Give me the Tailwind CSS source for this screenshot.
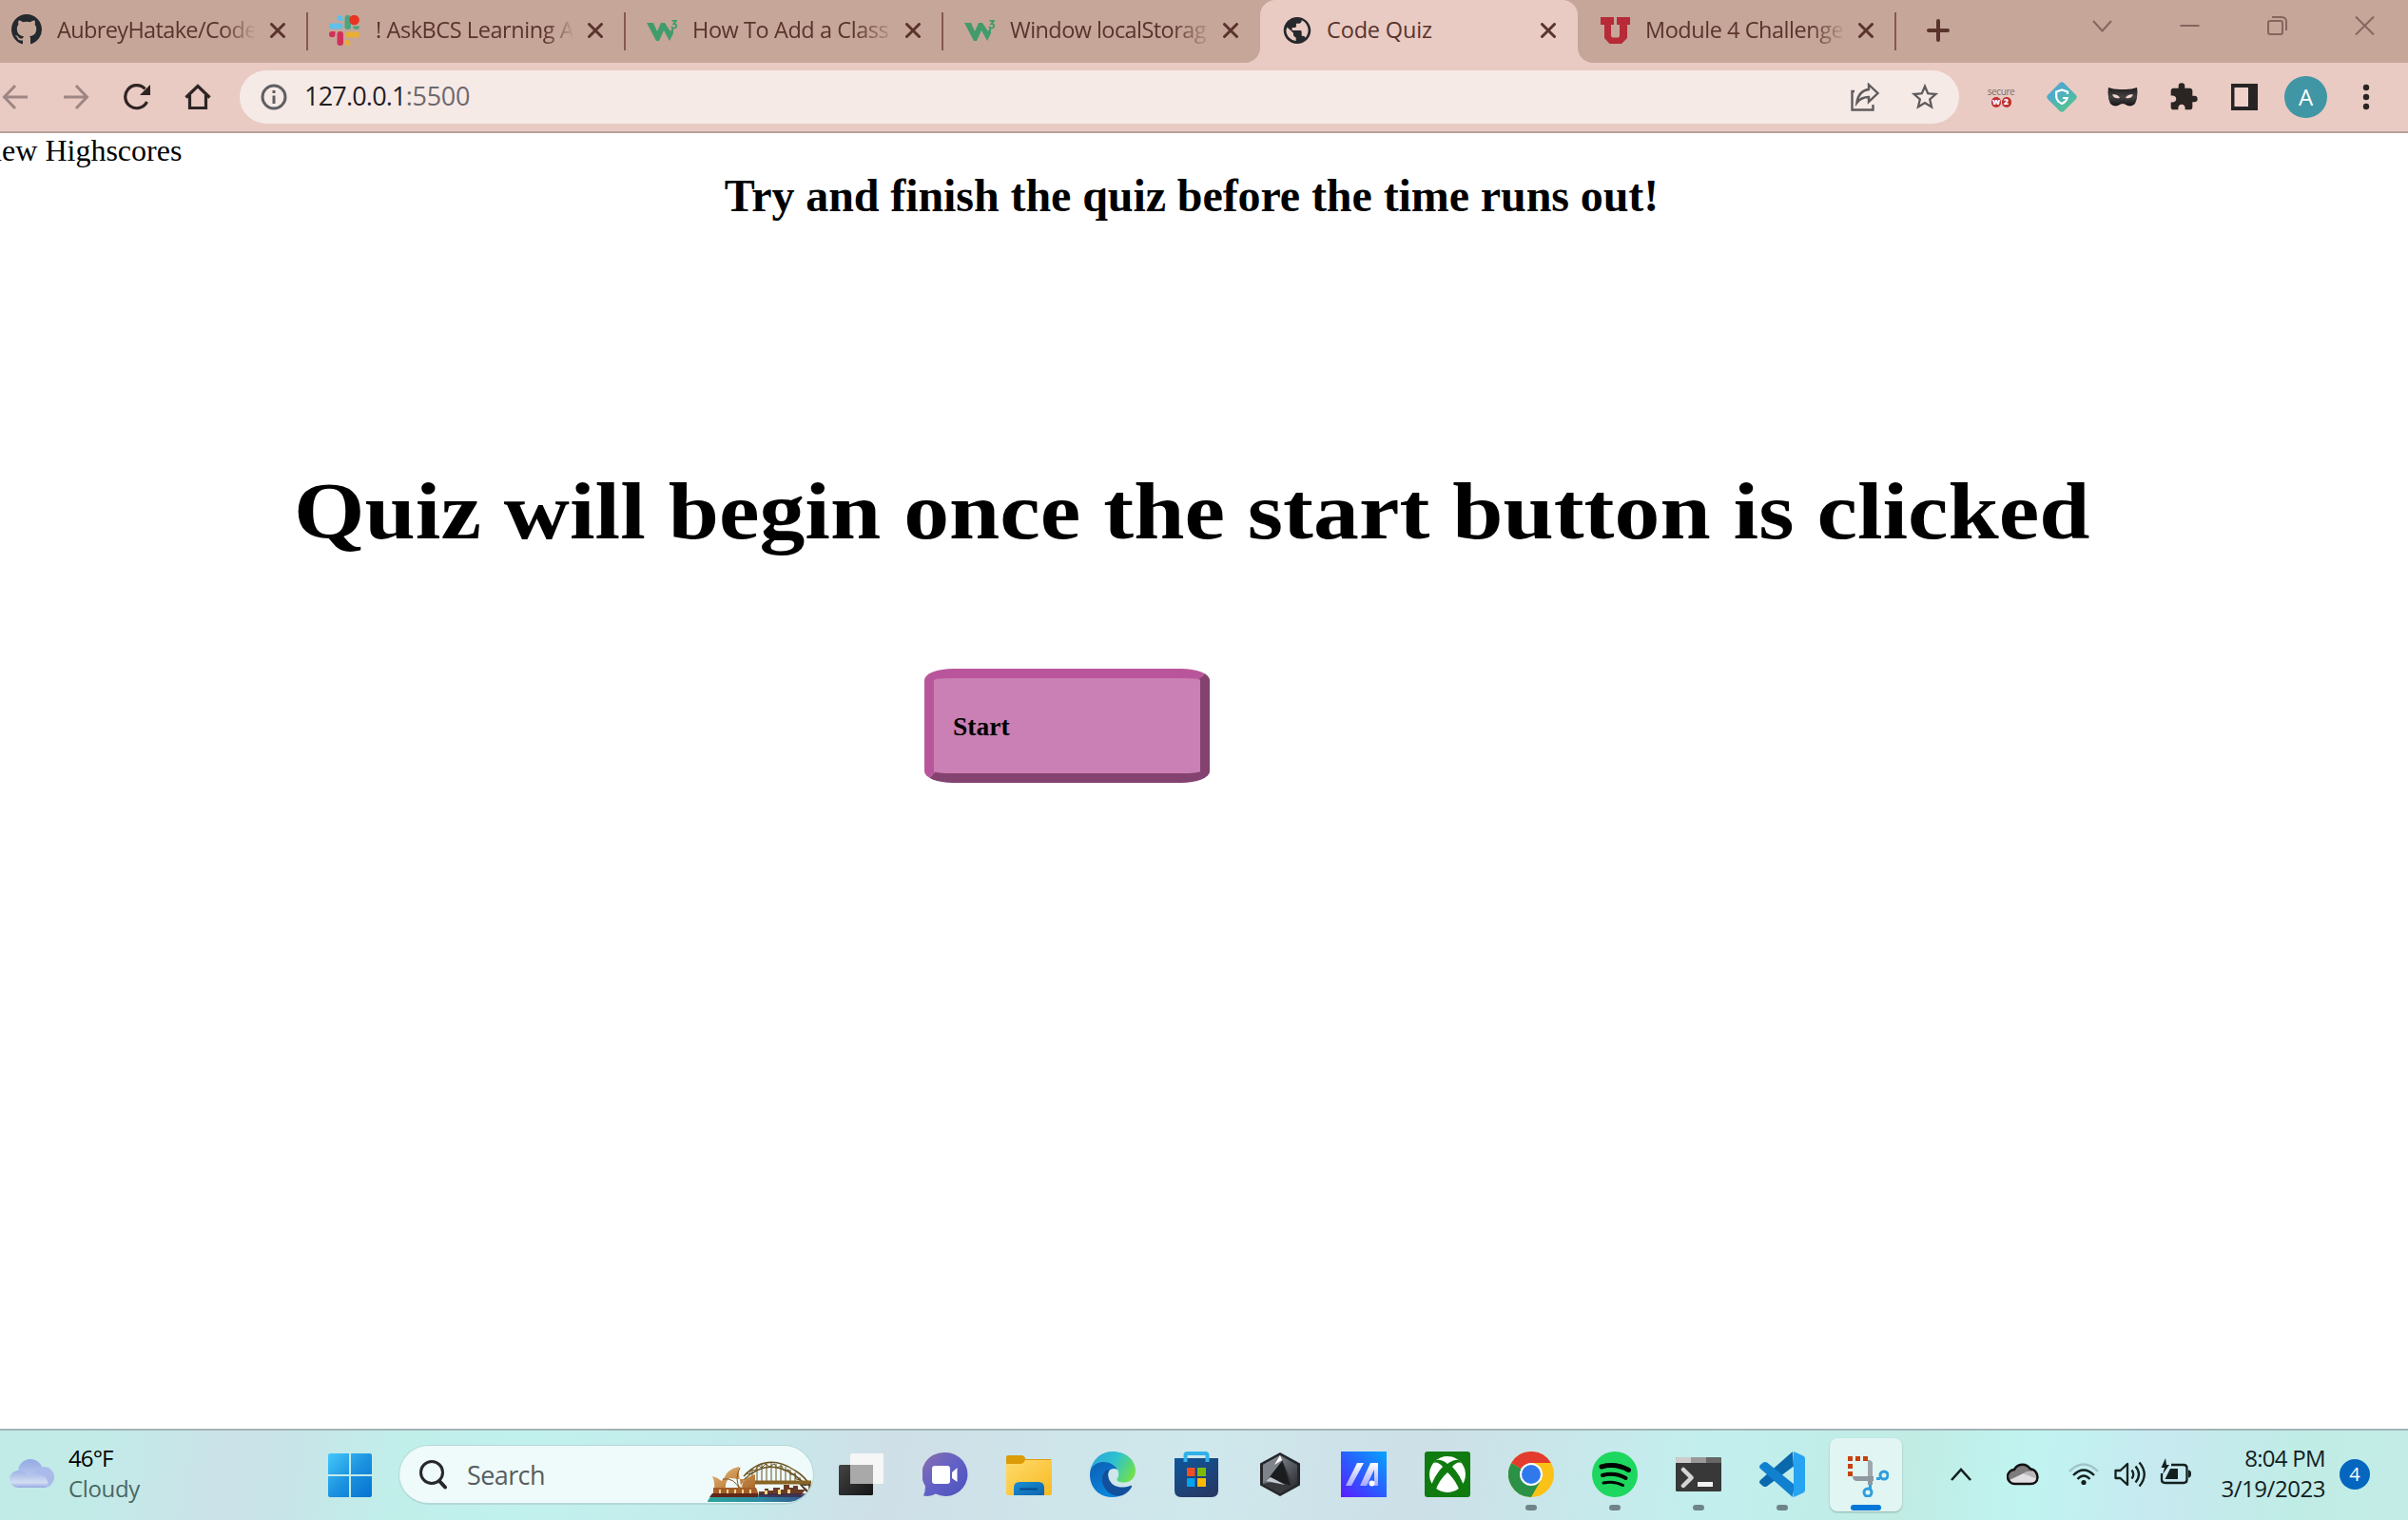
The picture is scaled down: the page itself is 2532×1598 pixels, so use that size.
<!DOCTYPE html>
<html lang="en">
<head>
<meta charset="utf-8">
<title>Code Quiz</title>
<script src="https://cdn.jsdelivr.net/npm/@tailwindcss/browser@4"></script>
</head>
<body class="w-[2532px] h-[1598px] overflow-hidden bg-white flex flex-col font-['Open_Sans','Noto_Sans',sans-serif] text-black">

<!-- Tab strip -->
<header class="h-[66px] shrink-0 flex bg-[#e9cbc3] text-[#5a332d] text-[23.5px] leading-[62px] whitespace-nowrap">
  <div class="flex w-[1325px] shrink-0 bg-[#c6a699] rounded-br-2xl overflow-hidden">
    <div class="w-[323px] shrink-0 relative flex pl-3">
      <svg class="w-8 h-8 mt-[15px] shrink-0" viewBox="0 0 16 16" fill="#24292e"><path d="M8 0C3.58 0 0 3.58 0 8c0 3.54 2.29 6.53 5.47 7.59.4.07.55-.17.55-.38 0-.19-.01-.82-.01-1.49-2.01.37-2.53-.49-2.69-.94-.09-.23-.48-.94-.82-1.13-.28-.15-.68-.52-.01-.53.63-.01 1.08.58 1.23.82.72 1.21 1.87.87 2.33.66.07-.52.28-.87.51-1.07-1.78-.2-3.64-.89-3.64-3.95 0-.87.31-1.59.82-2.15-.08-.2-.36-1.02.08-2.12 0 0 .67-.21 2.2.82a7.6 7.6 0 0 1 4 0c1.53-1.04 2.2-.82 2.2-.82.44 1.1.16 1.92.08 2.12.51.56.82 1.27.82 2.15 0 3.07-1.87 3.75-3.65 3.95.29.25.54.73.54 1.48 0 1.07-.01 1.93-.01 2.2 0 .21.15.46.55.38A8 8 0 0 0 16 8c0-4.42-3.58-8-8-8z"/></svg>
      <div class="ml-4 mr-px w-[207px] overflow-hidden tracking-[-0.64px] [mask-image:linear-gradient(90deg,#000_174px,transparent_210px)]">AubreyHatake/Code-</div>
      <svg class="w-4 h-4 ml-[16px] mt-6" viewBox="0 0 16 16" stroke="#5a332d" stroke-width="3" stroke-linecap="round"><path d="M1.500 1.500l13 13M14.500 1.500l-13 13"/></svg>
    </div>
    <div class="w-[334px] shrink-0 flex pl-[23px] relative">
      <i class="absolute left-[-1px] top-[13px] w-0.5 h-10 bg-[#85584f]"></i>
      <svg class="w-8 h-8 mt-4 shrink-0" viewBox="0 0 32 32"><g fill="#5fc0ea"><rect x="0" y="8.500" width="14.500" height="6" rx="3"/><path d="M8.500 3a3 3 0 0 1 6 0v3h-3a3 3 0 0 1-3-3z"/></g><g fill="#4aa581"><rect x="16.500" y="0" width="6.500" height="15" rx="3"/><path d="M25 11.500h7a3.200 3.200 0 0 1-7 0z"/></g><g fill="#d1305b"><rect x="8.500" y="17" width="6.500" height="15" rx="3"/><path d="M0 20a3 3 0 0 1 3-3h3.500v3a3.200 3.200 0 0 1-6.500 0z"/></g><g fill="#e8af36"><rect x="17" y="17.500" width="15" height="6" rx="3"/><path d="M16.500 26h3.500a3 3 0 1 1-3.500 3z"/></g><circle cx="26.500" cy="5" r="5.300" fill="#ea3323"/></svg>
      <div class="ml-[17px] w-[207px] overflow-hidden tracking-[-0.43px] [mask-image:linear-gradient(90deg,#000_178px,transparent_210px)]">! AskBCS Learning A</div>
      <svg class="w-4 h-4 ml-[16px] mt-6" viewBox="0 0 16 16" stroke="#5a332d" stroke-width="3" stroke-linecap="round"><path d="M1.500 1.500l13 13M14.500 1.500l-13 13"/></svg>
    </div>
    <div class="w-[334px] shrink-0 flex pl-[23px] relative">
      <i class="absolute left-[-1px] top-[13px] w-0.5 h-10 bg-[#85584f]"></i>
      <svg class="w-8 h-8 mt-4 shrink-0" viewBox="0 0 32 32"><path fill="#429b6b" d="M0 8h7l4 9 4-9h4l6 9 1.500-3H28v5l-4 8-6-11-5 11h-3z"/><path fill="none" stroke="#429b6b" stroke-width="1.800" d="M26.500 5.800h4.500l-2.600 3.200c4 0 3.500 4.600.2 4.600-1.500 0-2.300-.8-2.600-1.800"/></svg>
      <div class="ml-4 mr-px w-[207px] overflow-hidden tracking-[-0.43px] [mask-image:linear-gradient(90deg,#000_170px,transparent_216px)]">How To Add a Class</div>
      <svg class="w-4 h-4 ml-[16px] mt-6" viewBox="0 0 16 16" stroke="#5a332d" stroke-width="3" stroke-linecap="round"><path d="M1.500 1.500l13 13M14.500 1.500l-13 13"/></svg>
    </div>
    <div class="w-[334px] shrink-0 flex pl-[23px] relative">
      <i class="absolute left-[-1px] top-[13px] w-0.5 h-10 bg-[#85584f]"></i>
      <svg class="w-8 h-8 mt-4 shrink-0" viewBox="0 0 32 32"><path fill="#429b6b" d="M0 8h7l4 9 4-9h4l6 9 1.500-3H28v5l-4 8-6-11-5 11h-3z"/><path fill="none" stroke="#429b6b" stroke-width="1.800" d="M26.500 5.800h4.500l-2.600 3.200c4 0 3.500 4.600.2 4.600-1.500 0-2.300-.8-2.600-1.800"/></svg>
      <div class="ml-4 mr-px w-[207px] overflow-hidden tracking-[-0.56px] [mask-image:linear-gradient(90deg,#000_170px,transparent_214px)]">Window localStorag</div>
      <svg class="w-4 h-4 ml-[16px] mt-6" viewBox="0 0 16 16" stroke="#5a332d" stroke-width="3" stroke-linecap="round"><path d="M1.500 1.500l13 13M14.500 1.500l-13 13"/></svg>
    </div>
  </div>
  <div class="w-[334px] h-10 shrink-0 bg-[#c6a699]">
    <div class="h-10 bg-[#e9cbc3] rounded-t-2xl flex pl-6">
      <svg class="w-8 h-8 mt-4 -ml-px mr-px shrink-0" viewBox="0 0 24 24" fill="#26282b"><path d="M12 1.500C6.200 1.500 1.300 6.200 1.300 12S6.200 22.500 12 22.500 22.700 17.800 22.700 12 17.800 1.500 12 1.500zM4.200 9.500L9 14v1.200c0 1.200 1 2.200 2 2.200v2.800C6.500 19.700 3.300 16 3.300 12c0-.8.300-1.700.900-2.500zM18.500 17.800c-.3-.9-1.100-1.500-2-1.500h-1v-3.200c0-.6-.5-1.100-1-1.100H8V9.800h2.200c.6 0 1-.5 1-1.100V6.500h2.200c1.200 0 2.100-1 2.100-2.200v-.4c3 1.300 5.200 4.400 5.200 8 0 2.300-.9 4.300-2.200 5.900z"/></svg>
      <div class="ml-[14px] w-[225px] tracking-[-0.15px]">Code Quiz</div>
      <svg class="w-4 h-4 mt-6" viewBox="0 0 16 16" stroke="#5a332d" stroke-width="3" stroke-linecap="round"><path d="M1.500 1.500l13 13M14.500 1.500l-13 13"/></svg>
    </div>
  </div>
  <div class="grow flex bg-[#c6a699] rounded-bl-2xl">
    <div class="w-[335px] shrink-0 flex pl-6 relative">
      <svg class="w-8 h-8 mt-4 shrink-0" viewBox="0 0 32 32" fill="#b72a37"><path d="M0 2h14v8h-3v12l1.500 1.500h6L20 22V10h-3V2h14v8h-3v14l-6 6H9.500L4 24V10H0z"/></svg>
      <div class="ml-[15px] mr-px w-[207px] overflow-hidden tracking-[-0.46px] [mask-image:linear-gradient(90deg,#000_174px,transparent_212px)]">Module 4 Challenge</div>
      <svg class="w-4 h-4 ml-[16px] mt-6" viewBox="0 0 16 16" stroke="#5a332d" stroke-width="3" stroke-linecap="round"><path d="M1.500 1.500l13 13M14.500 1.500l-13 13"/></svg>
      <i class="absolute right-0 top-[13px] w-0.5 h-10 bg-[#85584f]"></i>
    </div>
    <svg class="w-6 h-6 ml-8 mt-5 shrink-0" viewBox="0 0 24 24" stroke="#5a332d" stroke-width="4" stroke-linecap="round"><path d="M12 2v20M2 12h20"/></svg>
    <div class="ml-auto mr-[35px] mt-[17px] flex gap-[71px]">
      <svg class="w-[21px] h-5" viewBox="0 0 21 20" fill="none" stroke="#85655d" stroke-width="2"><path d="M1 5l9.500 10.500L20 5"/></svg>
      <svg class="w-[21px] h-5" viewBox="0 0 21 20" stroke="#85655d" stroke-width="2"><path d="M0.500 10h20"/></svg>
      <svg class="w-[21px] h-5" viewBox="0 0 21 20" fill="none" stroke="#85655d" stroke-width="2"><rect x="1" y="5" width="15" height="14" rx="2"/><path d="M5 1h10q5 0 5 5v9"/></svg>
      <svg class="w-[21px] h-5" viewBox="0 0 21 20" stroke="#85655d" stroke-width="2"><path d="M1 .5l19 19M20 .5l-19 19"/></svg>
    </div>
  </div>
</header>

<!-- Toolbar -->
<nav class="h-[74px] shrink-0 flex items-center bg-[#e9cbc3] border-b-2 border-[#b9a19c] pl-0.5">
  <div class="flex items-center gap-9 w-[250px] shrink-0">
    <svg class="w-7 h-7 shrink-0" viewBox="0 0 28 28" fill="none" stroke="#9d8683" stroke-width="3"><path d="M27 14H3M14 2L2.500 14 14 26"/></svg>
    <svg class="w-7 h-7 shrink-0" viewBox="0 0 28 28" fill="none" stroke="#9d8683" stroke-width="3"><path d="M1 14h24M14 2l11.500 12L14 26"/></svg>
    <svg class="w-7 h-7 shrink-0" viewBox="0 0 28 28"><path d="M24.500 19A12 12 0 1 1 22.500 5.500" fill="none" stroke="#2e2423" stroke-width="3.200"/><path d="M28 1v11H17z" fill="#2e2423"/></svg>
    <svg class="w-7 h-7 shrink-0" viewBox="0 0 28 28" fill="none" stroke="#2e2423" stroke-width="3.200"><path d="M1.500 14.500L14 2.500l12.500 12M5.500 12v13.500h17V12"/></svg>
  </div>
  <div class="w-[1808px] h-14 shrink-0 rounded-full bg-[#f6eae7] flex items-center pl-[22px] pr-[19px] text-[27px]">
    <svg class="w-7 h-7 mr-[18px]" viewBox="0 0 28 28" fill="none" stroke="#5f6063" stroke-width="3"><circle cx="14" cy="14" r="12"/><path d="M14 7v3M14 12.500v8.500"/></svg>
    <span class="text-[#1f2023] -mt-px tracking-[-0.8px]">127.0.0.1</span><span class="text-[#6d696c] -mt-px tracking-[-0.3px]">:5500</span>
    <svg class="w-[30px] h-[30px] ml-auto" viewBox="0 0 30 30" fill="none" stroke="#5f5b5c" stroke-width="2.400"><path d="M4 9H1.500v19.500h22V23"/><path d="M19 2l9.500 9L19 20v-5c-6 0-9.500 2-12.500 6 1-8 5.500-13 12.500-14z"/></svg>
    <svg class="w-[34px] h-[34px] ml-[31px]" viewBox="0 0 24 24" fill="#5f5b5c"><path d="M22 9.240l-7.190-.62L12 2 9.190 8.630 2 9.240l5.460 4.730L5.820 21 12 17.270 18.180 21l-1.630-7.030L22 9.240zM12 15.400l-3.760 2.270 1-4.280-3.320-2.880 4.380-.38L12 6.100l1.710 4.040 4.380.38-3.320 2.880 1 4.280L12 15.400z"/></svg>
  </div>
  <div class="flex items-center ml-7 text-[10px]">
    <div class="w-8 flex flex-col items-center leading-none">
      <span class="text-[10px] tracking-[-0.4px] text-[#7b6a68] leading-[11px]">secure</span>
      <span class="flex gap-px text-white text-[9px] font-bold leading-[10px]"><b class="w-2.5 h-[11px] rounded-full bg-[#c03032] text-center tracking-[-1px]">w</b><b class="w-2.5 h-[11px] rounded-full bg-[#c03032] text-center">2</b></span>
    </div>
    <svg class="w-8 h-8 ml-8" viewBox="0 0 32 32"><defs><linearGradient id="gr" x1="0.200" y1="0" x2="0.800" y2="1"><stop offset="0.300" stop-color="#4fabc9"/><stop offset="0.800" stop-color="#52bf9a"/></linearGradient></defs><path d="M13.500 1.500q2.500-2.500 5 0l12 12q2.500 2.500 0 5l-12 12q-2.500 2.500-5 0l-12-12q-2.500-2.500 0-5z" fill="url(#gr)"/><path d="M22 13v-2.500L16 8.500l-5.800 2V16q.5 4.500 5.800 7 5-2.300 5.600-6H17" fill="none" stroke="#fff" stroke-width="2.200"/></svg>
    <svg class="w-8 h-8 ml-8" viewBox="0 0 32 32"><defs><linearGradient id="mk" x1="0" y1="0" x2="0" y2="1"><stop offset="0" stop-color="#1b1a1b"/><stop offset=".5" stop-color="#454242"/><stop offset="1" stop-color="#161516"/></linearGradient></defs><path d="M1 6q6 2.500 15 2 9 .5 15-2 1.500 10-2 17-3 3.500-8 2-3-2-5-2t-5 2q-5 1.500-8-2Q-.5 16 1 6z" fill="url(#mk)"/><path d="M5 13.500q5.500-1 8 3.500-5.500 1.500-8-3.500zM27 13.500q-5.500-1-8 3.500 5.500 1.500 8-3.500z" fill="#f2d4cf"/></svg>
    <svg class="w-8 h-8 ml-8" viewBox="0 0 24 24" fill="#2a2423"><path d="M20.500 11H19V7c0-1.100-.9-2-2-2h-4V3.500a2.500 2.500 0 0 0-5 0V5H4c-1.100 0-1.990.9-1.990 2v3.800H3.500c1.490 0 2.700 1.210 2.700 2.700s-1.210 2.700-2.700 2.700H2V20c0 1.100.9 2 2 2h3.800v-1.500c0-1.490 1.210-2.700 2.700-2.700s2.700 1.210 2.700 2.700V22H17c1.100 0 2-.9 2-2v-4h1.500a2.500 2.500 0 0 0 0-5z"/></svg>
    <svg class="w-7 h-7 ml-[34px]" viewBox="0 0 28 28"><path fill="#272425" d="M0 0h28v28H0z"/><path fill="#f0d2cb" d="M3.500 4H18v20H3.500z"/></svg>
    <div class="w-[45px] h-11 ml-7 rounded-full bg-[#4096a5] text-white text-[24px] leading-[43px] text-center">A</div>
    <svg class="w-2 h-7 ml-[37px]" viewBox="0 0 8 28" fill="#2a2423"><circle cx="4" cy="4" r="3.200"/><circle cx="4" cy="14" r="3.200"/><circle cx="4" cy="24" r="3.200"/></svg>
  </div>
</nav>

<!-- Page -->
<main class="grow w-[2506px] flex flex-col items-center font-['Liberation_Serif',serif] whitespace-nowrap">
  <a class="self-start text-[32px] leading-9 -ml-7">View Highscores</a>
  <h2 class="mt-0.5 text-[48px] leading-[56px] font-bold tracking-[-0.08px]">Try and finish the quiz before the time runs out!</h2>
  <h1 class="mt-[254px] text-[84px] leading-[100px] font-bold scale-x-[1.14]">Quiz will begin once the start button is clicked</h1>
  <button class="self-start ml-[972px] mt-[115px] w-[300px] h-[120px] border-[10px] border-t-[#b9569b] border-l-[#b9569b] border-r-[#844270] border-b-[#844270] bg-[#ca80b4] rounded-[30px/12px] pl-5 pt-0.5 text-left text-[27.5px] font-bold">Start</button>
</main>

<!-- Taskbar -->
<footer class="h-24 shrink-0 border-t-2 border-[#a3b4b7] flex items-center relative text-[24px] leading-8 whitespace-nowrap bg-[linear-gradient(100deg,#c1ebe6_0%,#c2ebe8_4%,#cbe2e8_9.500%,#c8e4e8_12%,#c0efea_17%,#c1f1ed_22%,#c4ebec_30%,#cfdfe7_37%,#cee5ea_44%,#cfe8ec_50%,#cddfe7_59%,#c7e9eb_66%,#c2efee_71%,#c0ece4_79%,#c0f4f1_84%,#c7e9f0_89.500%,#c0ece6_95%,#c4ece6_100%)]">
  <svg class="w-[50px] h-8 ml-2 -mt-1" viewBox="0 0 50 32"><defs><linearGradient id="cl" x1="0" y1="0" x2="0" y2="1"><stop offset="0" stop-color="#93a9e4"/><stop offset="1" stop-color="#c9d6f0"/></linearGradient><linearGradient id="c2" x1="0" y1="0" x2="0" y2="1"><stop offset="0" stop-color="#9db2e6"/><stop offset=".7" stop-color="#d3def2"/><stop offset="1" stop-color="#94a9e2"/></linearGradient></defs><circle cx="24" cy="14" r="13" fill="url(#cl)"/><circle cx="38" cy="20" r="11" fill="#a9bbea"/><path d="M11 13c6 0 9 3 11 6l6-4 12 5q6 11-3 11H11a9 9 0 0 1 0-18z" fill="url(#c2)"/></svg>
  <div class="ml-3.5 w-[90px] -mt-1"><div class="tracking-[-0.9px]">46°F</div><div class="text-[#4b6764] tracking-[-0.34px]">Cloudy</div></div>
  <svg class="w-[46px] h-[46px] ml-[183px]" viewBox="0 0 46 46"><defs><linearGradient id="wn" gradientUnits="userSpaceOnUse" x1="0" y1="0" x2="46" y2="46"><stop offset="0" stop-color="#44c8fb"/><stop offset=".5" stop-color="#1c93e0"/><stop offset="1" stop-color="#0572d0"/></linearGradient></defs><path fill="url(#wn)" d="M2 0h20v22H0V2q0-2 2-2zM24 0h20q2 0 2 2v20H24zM0 24h22v22H2q-2 0-2-2zM24 24h22v20q0 2-2 2H24z"/></svg>
  <div class="w-[437px] h-[63px] ml-7 -mt-0.5 rounded-full bg-[#effafa] border border-b-2 border-[#b3d8d8] overflow-hidden flex items-center text-[27px] text-[#555e60]">
    <svg class="w-[30px] h-8 ml-[21px]" viewBox="0 0 30 32" fill="none" stroke="#26282a" stroke-linecap="round"><circle cx="13" cy="14" r="11.500" stroke-width="3"/><path d="M21 23l6 6.500" stroke-width="4"/></svg>
    <span class="ml-[20px] mt-0.5 tracking-[-0.6px]">Search</span>
    <svg class="w-[110px] h-[44px] ml-auto mr-[1px] self-end" viewBox="0 0 110 44">
      <defs><linearGradient id="op" x1="0" y1="0" x2="1" y2="1"><stop offset="0" stop-color="#e9b874"/><stop offset="1" stop-color="#a9672a"/></linearGradient><linearGradient id="wt" x1="0" y1="0" x2="1" y2="0"><stop offset="0" stop-color="#2ba59c"/><stop offset=".5" stop-color="#2d8da5"/><stop offset="1" stop-color="#34508a"/></linearGradient></defs>
      <path d="M0 42l4-6h104q-10 6-22 7H0z" fill="url(#wt)"/>
      <g fill="none" stroke="#6b5320"><path d="M38 16Q62-10 92 10q10 6 17 17M38 20Q62-4 90 14q8 5 13 12" stroke-width="1.500"/><path d="M40 13l4 1 2-5 4 1 3-5 4 2 4-4 4 3 5-3 3 4 5-2 2 5 5-1 2 5 5 0 1 5 5 1" stroke-width="1"/><path d="M47 9v14M52 6v17M57 4v19M62 3v20M67 2v21M72 3v20M77 4v19M82 6v17M87 9v14M92 12v11M97 17v6" stroke-width="1"/></g>
      <path d="M50 20.500h59v4H50z" fill="#8a6425"/><path d="M98 25h9v10zM98 25l9 8" fill="none" stroke="#4d3a22" stroke-width="1.500"/>
      <path d="M54 32h6v-3h4v2h5v-3h7v2h4v-5h6v3h4v-2h5v4h8l-5 6H54z" fill="#6a3b24"/><path d="M54 34h50l-2 4H54z" fill="#3d2a4c" opacity=".8"/>
      <path d="M5 16q11 2 14 14H7q1-8-2-14zM18 17Q20 9 33 6q-1 8 3 24H14q-2-8 4-13zM34 30Q35 19 50 14v16zM23 18q-5 4-4 12h17q0-8 3-11-7 0-16-1z" fill="url(#op)"/><path d="M16 19q12-2 18 11M34 7q-6 12 0 22" stroke="#8a5426" fill="none"/>
      <path d="M6 28h45l3 8H6z" fill="#a35d28"/><path d="M5 34h48v4H2z" fill="#61291c"/><g fill="#f9d98a"><path d="M12 30h2v4h-2zM20 30h2v4h-2zM28 30h2v4h-2zM36 30h2v4h-2zM44 30h2v4h-2zM60 31h3v4h-3zM74 30h3v5h-3zM84 30h3v4h-3z"/></g>
    </svg>
  </div>

  <div class="flex items-center gap-10 ml-[26px] -mt-0.5">
    <svg class="w-12 h-12" viewBox="0 0 48 48"><defs><linearGradient id="tv" x1="0" y1="0" x2="1" y2="1"><stop offset="0" stop-color="#444"/><stop offset="1" stop-color="#161616"/></linearGradient></defs><rect x="0" y="14" width="36" height="32" rx="1.500" fill="url(#tv)"/><rect x="12" y="2" width="35" height="32" rx="1.500" fill="#f6f6f7"/><path d="M12 14h24v20H12z" fill="#a9a9aa"/></svg>
    <svg class="w-12 h-12" viewBox="0 0 48 48"><defs><linearGradient id="ch" x1="0" y1="0" x2="1" y2="1"><stop offset="0" stop-color="#8a6fae"/><stop offset=".5" stop-color="#6260c6"/><stop offset="1" stop-color="#4b53bc"/></linearGradient></defs><path d="M24 1a23 23 0 1 1-10 43.500Q8 48 1 46.500q2-5 2-10A23 23 0 0 1 24 1z" fill="url(#ch)"/><rect x="10" y="15" width="19" height="19" rx="3" fill="#fff"/><path d="M31 22l5.500-5v15L31 28z" fill="#fff"/></svg>
    <svg class="w-12 h-12" viewBox="0 0 48 48"><defs><linearGradient id="fo" x1="0" y1="0" x2="1" y2="1"><stop offset="0" stop-color="#ffdb6b"/><stop offset="1" stop-color="#f7ba22"/></linearGradient><linearGradient id="fb" x1="0" y1="0" x2="1" y2="1"><stop offset="0" stop-color="#1b8fd3"/><stop offset="1" stop-color="#0d63ad"/></linearGradient></defs><path d="M0 6q0-2 2-2h14q3 0 4.500 4H46q2 0 2 2v6H0z" fill="#dc9c08"/><path d="M0 13h15q3 0 5-4h28v35q0 2-2 2H2q-2 0-2-2z" fill="url(#fo)"/><path d="M8 46V38q0-6 6-6h20q6 0 6 6v8z" fill="url(#fb)"/><path d="M15 39.500h17" stroke="#07498b" stroke-width="2" stroke-linecap="round"/></svg>
    <svg class="w-12 h-12" viewBox="0 0 48 48"><defs><linearGradient id="e1" x1="0" y1=".2" x2="1" y2=".6"><stop offset="0" stop-color="#2aa5dd"/><stop offset=".5" stop-color="#2dc2cf"/><stop offset="1" stop-color="#6fe04e"/></linearGradient><linearGradient id="e2" x1="0" y1="0" x2=".5" y2="1"><stop offset="0" stop-color="#0c5fb4"/><stop offset="1" stop-color="#0a86dc"/></linearGradient></defs><path d="M0 22C2 8 12 0 24 0c14 0 24 9 24 20 0 8-6 12.500-12 12.500-5 0-8-1.500-7.500-3.500C31 26 31 20 27 16 19 8 5 12 0 22z" fill="url(#e1)"/><path d="M0 24c0-8 7-13 14-13 9 0 14 5 15 8-7-3-11 2-10 8 1 9 8 14 14 19-4 2-8 2-11 2C8 47 0 37 0 24z" fill="url(#e2)"/><path d="M18 19c-7 5-6 14-2 20 6 9 17 9 22 5 3-2 5-5 6-7 .500-1-.5-1.500-1.500-1-9 3-18 2-22-6-1.500-4-2-7 0-11z" fill="#124f9d"/></svg>
    <svg class="w-12 h-12" viewBox="0 0 48 48"><defs><linearGradient id="st" x1="0" y1="0" x2=".6" y2="1"><stop offset="0" stop-color="#0d579c"/><stop offset="1" stop-color="#263a68"/></linearGradient></defs><path d="M1 7h46v34q0 7-7 7H8q-7 0-7-7z" fill="url(#st)"/><path d="M12.500 11V4q0-2 2-2h19q2 0 2 2v7" fill="none" stroke="#2fb2ea" stroke-width="4"/><path fill="#f25022" d="M14 17h8.500v9H14z"/><path fill="#7fba00" d="M25 17h9v9h-9z"/><path fill="#00a4ef" d="M14 28h8.500v9H14z"/><path fill="#ffb900" d="M25 28h9v9h-9z"/></svg>
    <svg class="w-12 h-12" viewBox="0 0 48 48"><defs><linearGradient id="ar" x1="0" y1="0" x2="1" y2="1"><stop offset="0" stop-color="#a0a5ae"/><stop offset=".5" stop-color="#5c6067"/><stop offset="1" stop-color="#222"/></linearGradient></defs><path d="M24 1l21 11.500v23L24 47 3 35.500v-23z" fill="#25272a"/><path d="M24 4l18 10v20L24 44 6 34V14z" fill="url(#ar)"/><path d="M26 9l12 26-14 9L6 34l20-4z" fill="#37393d"/><path d="M26 9l9 27L13 27z" fill="#1b1c1e"/><path d="M24 4l3 5L12 27l-6 6V14z" fill="#7e838c"/><path d="M9 31l5-4 15 8z" fill="#c4c8cf"/><path d="M24 4l-6 10 8-5z" fill="#fff"/></svg>
    <svg class="w-12 h-12" viewBox="0 0 48 48"><defs><linearGradient id="ma" x1="1" y1="0" x2="0" y2="1"><stop offset="0" stop-color="#06a5ff"/><stop offset=".55" stop-color="#2d58ff"/><stop offset="1" stop-color="#5b1bff"/></linearGradient><linearGradient id="mb" x1="0" y1="0" x2="0" y2="1"><stop offset="0" stop-color="#fff"/><stop offset="1" stop-color="#a5a8ff"/></linearGradient></defs><path fill="url(#ma)" d="M0 0h48v48H0z"/><path d="M17 12h7L11 36H5zM31 12h8v24h-4V19l-8 17h-7z" fill="url(#mb)"/><circle cx="32.500" cy="33.500" r="3" fill="#fff"/></svg>
    <svg class="w-12 h-12" viewBox="0 0 48 48"><rect width="48" height="48" rx="3" fill="#107c10"/><circle cx="24" cy="24" r="19" fill="#fff"/><path d="M12 9q6-1 12 4 6-5 12-4l3 3q-5-2-10 4 8 8 13 22l-5 4Q33 30 24 22 15 30 11 42l-5-4Q11 24 19 16q-5-6-10-4z" fill="#107c10"/></svg>
    <svg class="w-12 h-12" viewBox="0 0 48 48"><circle cx="24" cy="24" r="24" fill="#fbc116"/><path d="M24 24L3.200 12A24 24 0 0 0 24 48l10.400-18z" fill="#2a9146"/><path d="M24 24L3.200 12A24 24 0 0 1 44.800 12H24z" fill="#e33b2e"/><circle cx="24" cy="24" r="12" fill="#fff"/><circle cx="24" cy="24" r="10" fill="#3079ec"/></svg>
    <svg class="w-12 h-12" viewBox="0 0 48 48"><circle cx="24" cy="24" r="24" fill="#1ed75f"/><g fill="none" stroke="#000" stroke-linecap="round"><path d="M10 16q15-4 28.500 3.500" stroke-width="5"/><path d="M11 25q13-3.500 24.500 3" stroke-width="4"/><path d="M12 33q11-2.500 20.500 2.500" stroke-width="3"/></g></svg>
    <svg class="w-12 h-12" viewBox="0 0 48 48"><rect y="6" width="48" height="36" rx="1.500" fill="#383838"/><path d="M0 12V7.500Q0 6 1.500 6H16v6z" fill="#ccc"/><path d="M16 6h16v6H16z" fill="#999"/><path d="M32 6h14.500q1.500 0 1.500 1.500V12H32z" fill="#666"/><path d="M8 19l8.500 8.500L8 36" fill="none" stroke="#d5d5d5" stroke-width="4.500" stroke-linecap="round" stroke-linejoin="round"/><path d="M23 32h16v5H23z" fill="#f2f2f2"/></svg>
    <svg class="w-12 h-12" viewBox="0 0 48 48"><path d="M35 0L1 30q-2 2 0 4l3 2.500q2 1 4 0l28-21z" fill="#0969ac"/><path d="M1 14q-2 2 0 4l34 30 2-13L8 11.500q-2-1-4 0z" fill="#1180cf"/><path d="M36 0l10 4.500q2 1 2 3v33q0 2-2 3L36 48z" fill="#26a3f1"/></svg>
    <div class="w-[76px] h-[77px] -ml-3.5 rounded-lg bg-[#e1f5f3] shadow-[0_1px_2px_#00000040] flex items-center justify-center">
      <svg class="w-12 h-12" viewBox="0 0 48 48"><path d="M26 9q5 0 5 5v21h-5zM10 26h22v5H15q-5 0-5-5z" fill="#8f979f"/><path d="M26 9q5 0 5 5v12h-5z" fill="#9ea6ae"/><g fill="#c8410b"><path d="M5 5h5v5H5zM13 5h5v5h-5zM21 5h5v5h-5zM5 13h5v5H5zM5 21h5v5H5z"/></g><g fill="none" stroke="#2f9edc" stroke-width="3"><circle cx="43" cy="25" r="4"/><circle cx="26" cy="43" r="4"/><path d="M35 28.500h4M28.500 35v5"/></g></svg>
    </div>
  </div>

  <!-- running app indicators -->
  <div class="absolute left-[1604px] top-[78px] flex gap-[76px]">
    <i class="w-3 h-1.5 rounded-full bg-[#6f8488]"></i><i class="w-3 h-1.5 rounded-full bg-[#6f8488]"></i><i class="w-3 h-1.5 rounded-full bg-[#6f8488]"></i><i class="w-3 h-1.5 rounded-full bg-[#6f8488]"></i><i class="w-8 h-1.5 -ml-2.5 rounded-full bg-[#0377d7]"></i>
  </div>

  <svg class="w-[22px] h-4 ml-[51px] -mt-0.5" viewBox="0 0 22 16" fill="none" stroke="#14201f" stroke-width="2.600"><path d="M1 14L11 3l10 11"/></svg>
  <svg class="w-[34px] h-6 ml-[37px] -mt-0.5" viewBox="0 0 34 24"><path d="M9 22a7.500 7.500 0 0 1-1-15 9.500 9.500 0 0 1 16.500-1Q32 7.500 32.500 15q-.5 7-7.500 7z" fill="#e1dfe2"/><path d="M2 16q0-8 6-9a9.500 9.500 0 0 1 16.500-1l3 3-6 3 -4-1L3 18z" fill="#7e7b7d"/><path d="M17 11q7-5 14.500 0l1 6z" fill="#b9b7b9"/><path d="M9 22a7.500 7.500 0 0 1-1-15 9.500 9.500 0 0 1 16.500-1Q32 7.500 32.500 15q-.5 7-7.500 7z" fill="none" stroke="#111" stroke-width="2.500"/></svg>
  <svg class="w-8 h-7 ml-[31px] -mt-0.5" viewBox="0 0 32 28" fill="none" stroke="#14201f" stroke-width="2.300"><path d="M1 11q15-15 30 0" stroke="#a2c4c8"/><path d="M5 15q11-11 22 0M9.500 19q6.500-7 13 0"/><circle cx="16" cy="22.500" r="2.600" fill="#14201f" stroke="none"/></svg>
  <svg class="w-[33px] h-7 ml-4 -mt-0.5" viewBox="0 0 33 28" fill="none" stroke="#14201f" stroke-width="2.300"><path d="M1.500 10v8h5l7.500 7V3l-7.500 7z" stroke-linejoin="round"/><path d="M18.500 9.500q3.500 4.500 0 9M22.500 5.500q7 8.500 0 17M26.500 1.500q10.500 12.500 0 25"/></svg>
  <svg class="w-[34px] h-7 ml-[15px] -mt-2" viewBox="0 0 34 28"><path d="M12 7h13q3.500 0 3.500 3.500v12q0 3.500-3.500 3.500H5.500Q2 26 2 22.500V16" fill="none" stroke="#14201f" stroke-width="2.300"/><path d="M30 12.500q3 0 3 4t-3 4zM11 11h8v11H5.500z" fill="#14201f"/><path d="M6 0L1.500 10H5L3 17l7-10H7z" fill="#14201f"/></svg>
  <div class="ml-[30px] w-[110px] text-right text-[#12201f] -mt-1"><div class="tracking-[-0.7px]">8:04 PM</div><div class="tracking-[-0.45px]">3/19/2023</div></div>
  <div class="ml-[15px] -mt-0.5 w-8 h-8 rounded-full bg-[#0466bf] text-white text-[20px] text-center leading-[31px]">4</div>
</footer>
</body>
</html>
